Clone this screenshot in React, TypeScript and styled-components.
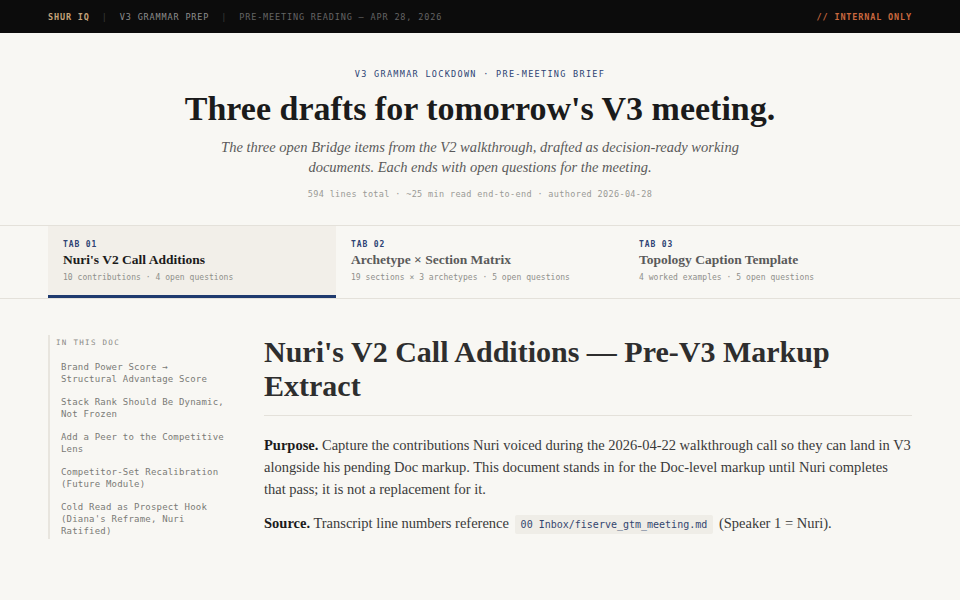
import React from "react";
import styled, { createGlobalStyle } from "styled-components";

const Global = createGlobalStyle`
  html, body { margin: 0; padding: 0; background: #f8f7f3; }
  body { font-family: "Liberation Serif", serif; color: #2a2a2a; }
  * { box-sizing: border-box; }
`;

const MONO = `"DejaVu Sans Mono", "Liberation Mono", monospace`;
const SERIF = `"Liberation Serif", "DejaVu Serif", serif`;

const TopBar = styled.header`
  height: 33px;
  background: #0c0c0c;
  display: flex;
  align-items: center;
  justify-content: space-between;
  padding: 0 48px;
  font-family: ${MONO};
  font-size: 8.5px;
  letter-spacing: 0.85px;
  text-transform: uppercase;
`;

const Crumbs = styled.div`
  display: flex;
  align-items: center;
  gap: 12px;
`;

const Crumb = styled.span<{ $tone: "brand" | "mid" | "dim" | "sep" | "warn" }>`
  color: ${(p) =>
    ({ brand: "#c4a27a", mid: "#8c8c8c", dim: "#646464", sep: "#3a3a3a", warn: "#c9683f" })[p.$tone]};
  font-weight: ${(p) => (p.$tone === "brand" || p.$tone === "warn" ? 700 : 400)};
`;

const Hero = styled.section`
  text-align: center;
  padding: 35px 48px 25px;
  border-bottom: 1px solid #e4e1da;
`;

const Eyebrow = styled.div`
  font-family: ${MONO};
  font-size: 8.5px;
  line-height: 12px;
  letter-spacing: 1.3px;
  color: #2d4374;
  text-transform: uppercase;
`;

const Headline = styled.h1`
  margin: 7px 0 0;
  font-family: ${SERIF};
  font-size: 34px;
  line-height: 44px;
  font-weight: 700;
  color: #1b1b1b;
`;

const Lede = styled.p`
  margin: 6px auto 0;
  max-width: 530px;
  font-family: ${SERIF};
  font-style: italic;
  font-size: 14.5px;
  line-height: 20px;
  color: #5a5a5a;
`;

const Meta = styled.div`
  margin-top: 11px;
  font-family: ${MONO};
  font-size: 8.5px;
  line-height: 12px;
  letter-spacing: 0.35px;
  color: #9a9a96;
`;

const Tabs = styled.nav`
  display: grid;
  grid-template-columns: repeat(3, 288px);
  padding: 0 48px;
  border-bottom: 1px solid #e4e1da;
`;

const Tab = styled.div<{ $active?: boolean }>`
  padding: 14px 15px 0;
  height: 72px;
  background: ${(p) => (p.$active ? "#f2efe9" : "transparent")};
  border-bottom: 3px solid ${(p) => (p.$active ? "#1f3a6e" : "transparent")};
`;

const TabNo = styled.div`
  font-family: ${MONO};
  font-size: 8px;
  line-height: 10px;
  font-weight: 700;
  letter-spacing: 0.9px;
  color: #2d4374;
`;

const TabTitle = styled.div<{ $active?: boolean }>`
  font-family: ${SERIF};
  font-size: 13.5px;
  line-height: 20px;
  font-weight: 700;
  color: ${(p) => (p.$active ? "#1b1b1b" : "#5a5a5a")};
`;

const TabMeta = styled.div`
  margin-top: 2px;
  font-family: ${MONO};
  font-size: 8px;
  line-height: 12px;
  letter-spacing: 0.05px;
  color: #8f8f8b;
`;

const Body = styled.main`
  display: grid;
  grid-template-columns: 176px 1fr;
  gap: 40px;
  padding: 36px 48px 0;
`;

const Toc = styled.aside`
  border-left: 2px solid #e8e5de;
  padding: 3px 0 2px 6px;
  align-self: start;
  font-family: ${MONO};
`;

const TocLabel = styled.div`
  font-size: 7.5px;
  line-height: 10px;
  letter-spacing: 1.3px;
  color: #8a8a86;
  margin-bottom: 13px;
`;

const TocList = styled.ul`
  list-style: none;
  margin: 0;
  padding: 0 0 0 5px;
  display: flex;
  flex-direction: column;
  gap: 11px;
`;

const TocItem = styled.li`
  font-size: 9px;
  line-height: 12px;
  color: #7a7a76;
  letter-spacing: 0.2px;
  white-space: nowrap;
`;

const Article = styled.article`
  min-width: 0;
`;

const DocTitle = styled.h2`
  margin: 0;
  font-family: ${SERIF};
  font-size: 30px;
  line-height: 34px;
  font-weight: 700;
  color: #2e2e2e;
  padding-bottom: 12px;
  border-bottom: 1px solid #e4e1da;
`;

const Para = styled.p`
  margin: 18px 0 0;
  font-family: ${SERIF};
  font-size: 14.5px;
  line-height: 22px;
  color: #3a3a3a;
  & + & { margin-top: 12px; }
`;

const Strong = styled.strong`
  color: #1b1b1b;
  font-weight: 700;
`;

const Code = styled.code`
  font-family: ${MONO};
  font-size: 10px;
  background: #efede7;
  color: #33466f;
  padding: 4px 6px;
  border-radius: 2px;
  margin: 0 2px;
`;

const tabs = [
  { no: "TAB 01", title: "Nuri's V2 Call Additions", meta: "10 contributions · 4 open questions", active: true },
  { no: "TAB 02", title: "Archetype × Section Matrix", meta: "19 sections × 3 archetypes · 5 open questions" },
  { no: "TAB 03", title: "Topology Caption Template", meta: "4 worked examples · 5 open questions" },
];

const toc = [
  ["Brand Power Score →", "Structural Advantage Score"],
  ["Stack Rank Should Be Dynamic,", "Not Frozen"],
  ["Add a Peer to the Competitive", "Lens"],
  ["Competitor-Set Recalibration", "(Future Module)"],
  ["Cold Read as Prospect Hook", "(Diana's Reframe, Nuri", "Ratified)"],
];

export default function App() {
  return (
    <>
      <Global />
      <TopBar>
        <Crumbs>
          <Crumb $tone="brand">Shur IQ</Crumb>
          <Crumb $tone="sep">|</Crumb>
          <Crumb $tone="mid">V3 Grammar Prep</Crumb>
          <Crumb $tone="sep">|</Crumb>
          <Crumb $tone="dim">Pre-Meeting Reading — Apr 28, 2026</Crumb>
        </Crumbs>
        <Crumb $tone="warn">// Internal Only</Crumb>
      </TopBar>
      <Hero>
        <Eyebrow>V3 Grammar Lockdown · Pre-Meeting Brief</Eyebrow>
        <Headline>Three drafts for tomorrow's V3 meeting.</Headline>
        <Lede>
          The three open Bridge items from the V2 walkthrough, drafted as decision-ready working
          documents. Each ends with open questions for the meeting.
        </Lede>
        <Meta>594 lines total · ~25 min read end-to-end · authored 2026-04-28</Meta>
      </Hero>
      <Tabs>
        {tabs.map((t) => (
          <Tab key={t.no} $active={t.active}>
            <TabNo>{t.no}</TabNo>
            <TabTitle $active={t.active}>{t.title}</TabTitle>
            <TabMeta>{t.meta}</TabMeta>
          </Tab>
        ))}
      </Tabs>
      <Body>
        <Toc>
          <TocLabel>IN THIS DOC</TocLabel>
          <TocList>
            {toc.map((lines, i) => (
              <TocItem key={i}>
                {lines.map((l, j) => (
                  <React.Fragment key={j}>
                    {j > 0 && <br />}
                    {l}
                  </React.Fragment>
                ))}
              </TocItem>
            ))}
          </TocList>
        </Toc>
        <Article>
          <DocTitle>Nuri's V2 Call Additions — Pre-V3 Markup Extract</DocTitle>
          <Para>
            <Strong>Purpose.</Strong> Capture the contributions Nuri voiced during the 2026-04-22
            walkthrough call so they can land in V3 alongside his pending Doc markup. This document
            stands in for the Doc-level markup until Nuri completes that pass; it is not a
            replacement for it.
          </Para>
          <Para>
            <Strong>Source.</Strong> Transcript line numbers reference{" "}
            <Code>00 Inbox/fiserve_gtm_meeting.md</Code> (Speaker 1 = Nuri).
          </Para>
        </Article>
      </Body>
    </>
  );
}
